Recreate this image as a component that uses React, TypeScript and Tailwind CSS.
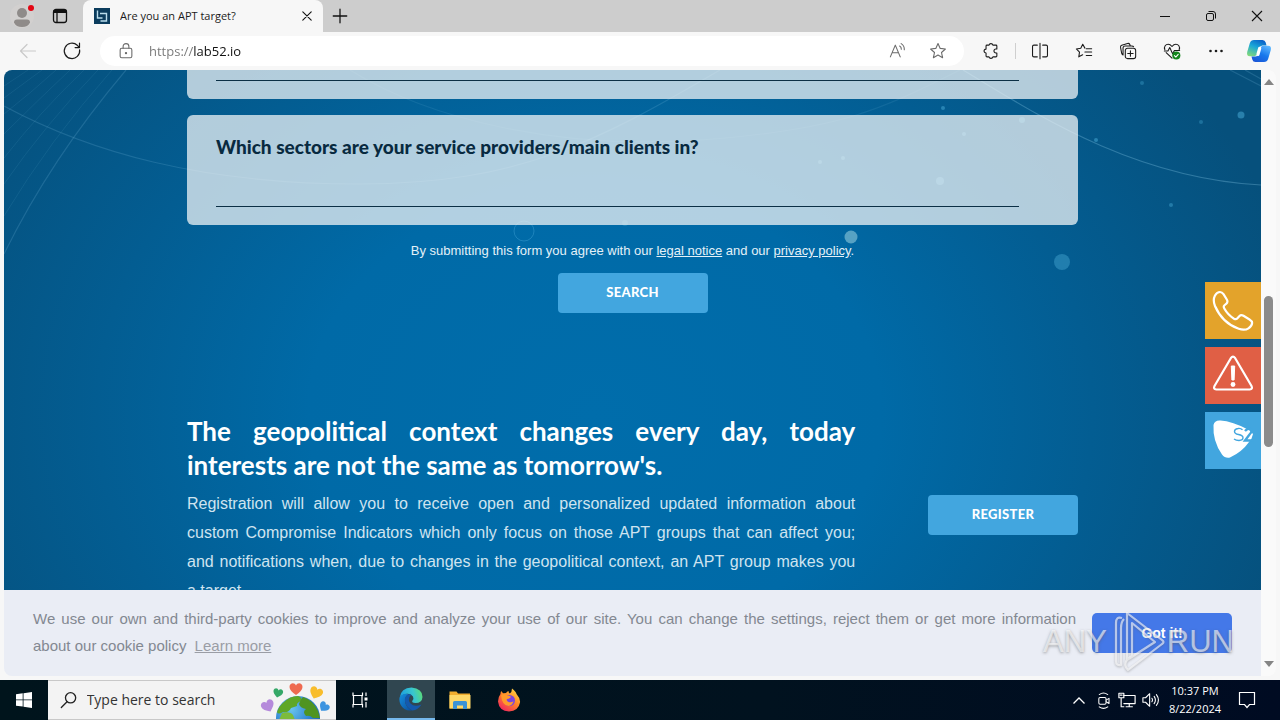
import type { ReactNode } from "react";

const UI = "font-['Open_Sans','Noto_Sans',sans-serif]";
const GEO = "font-['Lato','Open_Sans',sans-serif]";

function IconButton({ label, className, children }: { label: string; className: string; children: ReactNode }) {
  return (
    <button type="button" aria-label={label} className={`flex shrink-0 items-center justify-center ${className}`}>
      {children}
    </button>
  );
}

function Line({ size = 20, w = 1.2, children }: { size?: number; w?: number; children: ReactNode }) {
  return (
    <svg width={size} height={size} viewBox="0 0 20 20" fill="none" stroke="currentColor" strokeWidth={w} strokeLinecap="round" strokeLinejoin="round" aria-hidden="true">
      {children}
    </svg>
  );
}

const STAR = "M10 2.6l2.2 4.8 5.2.6-3.9 3.5 1.1 5.2-4.6-2.6-4.6 2.6 1.1-5.2L2.6 8l5.2-.6z";

function TabBar() {
  return (
    <header className="flex h-8 shrink-0 items-stretch bg-[#cdcdcd] text-[#111]">
      <IconButton label="Profile" className="w-11">
        <svg width="28" height="28" viewBox="0 0 28 28" aria-hidden="true">
          <circle cx="14" cy="14" r="12" fill="#d2d0cf" />
          <circle cx="14" cy="11" r="5" fill="#8f8b89" />
          <path d="M6 20.500q0-3 3-3h10q3 0 3 3-2 4.500-8 4.500t-8-4.500z" fill="#8f8b89" />
          <circle cx="23" cy="6" r="3" fill="#e30613" />
        </svg>
      </IconButton>
      <IconButton label="Tab actions" className="w-8">
        <svg width="16" height="16" viewBox="0 0 16 16" fill="none" stroke="#111" strokeWidth="1.300" aria-hidden="true">
          <rect x="1.500" y="1.500" width="13" height="13" rx="2.500" />
          <path d="M1.500 3.500h13" strokeWidth="3" />
          <path d="M5 4v10.500" />
        </svg>
      </IconButton>
      <div className="ml-[7px] flex w-60 items-center rounded-t-lg bg-[#f7f7f7] pr-2 pl-[11px]">
        <svg width="16" height="16" viewBox="0 0 16 16" className="shrink-0" aria-hidden="true">
          <rect width="16" height="16" fill="#0b3c5d" />
          <path d="M3.500 2.500v7.500h5M6 5.500h6.500v7.500h-6" fill="none" stroke="#b9dcec" strokeWidth="1.400" />
        </svg>
        <span className={`ml-[10px] grow truncate text-[11px] leading-4 text-[#1b1b1b] ${UI}`}>Are you an APT target?</span>
        <IconButton label="Close tab" className="size-4">
          <Line size={14} w={1.6}><path d="M4 4l12 12M16 4L4 16" /></Line>
        </IconButton>
      </div>
      <IconButton label="New tab" className="w-[34px]">
        <Line size={18} w={1.4}><path d="M10 2.500v15M2.500 10h15" /></Line>
      </IconButton>
      <div className="ml-auto flex">
        <IconButton label="Minimize" className="w-[46px]">
          <svg width="12" height="12" aria-hidden="true"><path d="M1 6.500h10" stroke="#111" /></svg>
        </IconButton>
        <IconButton label="Restore" className="w-[46px]">
          <svg width="12" height="12" fill="none" stroke="#111" aria-hidden="true">
            <rect x="1.500" y="3.500" width="7" height="7" rx="1.500" />
            <path d="M3.500 1.500h4.500q2.500 0 2.500 2.500v4.500" />
          </svg>
        </IconButton>
        <IconButton label="Close" className="w-[46px]">
          <svg width="12" height="12" stroke="#111" strokeWidth="1.100" aria-hidden="true"><path d="M1 1l10 10M11 1L1 11" /></svg>
        </IconButton>
      </div>
    </header>
  );
}

function Toolbar() {
  return (
    <nav className="flex h-[38px] shrink-0 items-center bg-[#f7f7f7] pl-[6px] text-[#1b1b1b]">
      <IconButton label="Back" className="h-8 w-11 text-[#c9c9c9]">
        <Line><path d="M17.500 10h-15M9 3.500L2.500 10 9 16.500" /></Line>
      </IconButton>
      <IconButton label="Refresh" className="h-8 w-11">
        <Line><path d="M17.600 8.800A7.700 7.700 0 1 1 15.300 4.300L17.400 6.500M17.500 2.200v4.400h-4.400" /></Line>
      </IconButton>
      <div className="ml-[6px] flex h-[30px] grow items-center rounded-full bg-white pl-[17px] text-[#6b6b6b]">
        <Line size={18}>
          <rect x="3.500" y="7" width="13" height="10.500" rx="1.800" />
          <path d="M6.800 7V5a3.200 3.200 0 0 1 6.400 0v2" />
          <circle cx="10" cy="12.300" r=".7" fill="currentColor" />
        </Line>
        <input
          aria-label="Address"
          defaultValue="https://lab52.io"
          className={`ml-[14px] min-w-0 grow bg-[linear-gradient(90deg,#767676_45px,#111_45px)] bg-clip-text text-[13px] leading-5 text-transparent outline-none ${UI}`}
        />
        <IconButton label="Read aloud" className="h-8 w-10">
          <Line size={18}><path d="M1.500 16.500L7 3.500l5.500 13M3.400 12h7.200M11.800 4.500q2 1.200 1.900 3.500M13.500 1.800q3.700 2.200 3.500 6.700" /></Line>
        </IconButton>
        <IconButton label="Add to favorites" className="mr-[6px] h-8 w-10">
          <Line size={20} w={1.1}><path d={STAR} /></Line>
        </IconButton>
      </div>
      <IconButton label="Extensions" className="ml-[5px] h-8 w-11">
        <Line size={18}>
          <path d="M5.500 3.500h2.300a2.200 2.200 0 0 1 4.300 0h3.400a1 1 0 0 1 1 1v3.300h-1a2.200 2.200 0 0 0 0 4.400h1v3.300a1 1 0 0 1-1 1h-3.400a2.200 2.200 0 0 1-4.300 0H5.500a1 1 0 0 1-1-1v-3.200a2.200 2.200 0 0 1 0-4.400V4.500a1 1 0 0 1 1-1z" />
        </Line>
      </IconButton>
      <span className="mr-[2px] ml-[2px] h-4 w-px bg-[#cfcfcf]" />
      <IconButton label="Split screen" className="h-8 w-11">
        <Line size={18}><path d="M10 1.500v17M7 3.500H3.200a1.500 1.500 0 0 0-1.500 1.500v10a1.500 1.500 0 0 0 1.500 1.500H7M13 3.500h3.800a1.500 1.500 0 0 1 1.500 1.500v10a1.500 1.500 0 0 1-1.500 1.500H13" /></Line>
      </IconButton>
      <IconButton label="Favorites" className="h-8 w-11">
        <Line size={18}><path d="M11 6.800L8.600 2.500 6.400 7 1.500 7.700 5 11.300 4.200 16.500 8.500 14.200M12.500 7.500h6M11 11.200h7.500M12.500 15h6" /></Line>
      </IconButton>
      <IconButton label="Collections" className="h-8 w-11">
        <Line size={18}>
          <rect x="7" y="7" width="11.500" height="11.500" rx="2.500" />
          <path d="M12.700 9.800v6M9.700 12.800h6M4.500 14.500Q3.400 14 3 12.500L1.700 6q-.3-1.800 1.300-2.400l6.500-2q1.800-.4 2.500 1.200l.5 1.400M4.500 14.500V6.700q0-2.200 2.300-2.200h7.500q1.500 0 1.900.8" />
        </Line>
      </IconButton>
      <IconButton label="Browser essentials" className="h-8 w-11">
        <Line size={18}>
          <path d="M2 8.500C.8 5 3 2.500 5.700 2.500 8 2.500 9.200 4 10 5c.8-1 2-2.500 4.300-2.500C17 2.500 19.200 5 18 8.500M3.500 11.800L10 18M1.500 10h4l2-3.800 3.200 7 2-3.700h5.800" />
          <circle cx="14.800" cy="15" r="4.500" fill="#13851b" stroke="none" />
          <path d="M12.700 15.200l1.500 1.500 2.700-3" stroke="#fff" />
        </Line>
      </IconButton>
      <IconButton label="Settings and more" className="h-8 w-11">
        <svg width="16" height="4" fill="#1b1b1b" aria-hidden="true"><circle cx="2.500" cy="2" r="1.300" /><circle cx="8" cy="2" r="1.300" /><circle cx="13.500" cy="2" r="1.300" /></svg>
      </IconButton>
      <IconButton label="Copilot" className="h-8 w-[42px]">
        <svg width="26" height="24" viewBox="0 0 26 24" aria-hidden="true">
          <defs>
            <linearGradient id="cpA" x1="0.700" y1="0" x2="0.200" y2="1"><stop offset="0" stopColor="#0a62c9" /><stop offset=".45" stopColor="#1aa7d8" /><stop offset="1" stopColor="#7fd87c" /></linearGradient>
            <linearGradient id="cpB" x1="0.800" y1="0" x2="0.200" y2="1"><stop offset="0" stopColor="#5cb6ff" /><stop offset=".5" stopColor="#1778ec" /><stop offset="1" stopColor="#1a55d6" /></linearGradient>
          </defs>
          <path d="M8 1h8.500q2.500 0 3.200 2.500l.8 3h-4q-2.500 0-3.300 2.800l-1.400 5q-.8 2.900-3.300 2.900H4Q.3 17.200 1.200 13L3.800 4.300Q4.900 1 8 1z" fill="url(#cpA)" />
          <path d="M18 23H9.500Q7 23 6.300 20.500l-.8-3h4q2.500 0 3.300-2.800l1.400-5q.8-2.900 3.300-2.900H22q3.700 0 2.800 4.200l-2.600 8.700Q21.100 23 18 23z" fill="url(#cpB)" />
          <path d="M13.700 9.300l-1.700 6" stroke="#fff" strokeWidth="3.200" strokeLinecap="round" />
        </svg>
      </IconButton>
    </nav>
  );
}

function Backdrop() {
  return (
    <svg className="absolute top-0 left-0" width="1257" height="520" viewBox="4 70 1257 520" fill="none" aria-hidden="true">
      <g stroke="#7fc0e0" strokeOpacity=".2" strokeWidth="1.200">
        <path d="M4 106C90 152 200 184 360 184S600 140 720 70" />
        <path d="M350 70C430 120 560 150 700 140S880 110 960 70" strokeOpacity=".12" />
        <path d="M963 70C1030 110 1130 178 1261 185" strokeOpacity=".35" />
        <path d="M1230 70L1261 86M1245 70l16 9" />
        <path d="M126 70Q50 160 4 254" />
      </g>
      <g stroke="#7fc0e0" strokeOpacity=".1">
        <path d="M112 70Q50 140 4 216M98 70Q45 125 4 184M84 70Q40 112 4 158M70 70Q38 100 4 134M56 70Q32 92 4 114M42 70L4 98M28 70L4 86" />
      </g>
      <circle cx="524" cy="231" r="10" stroke="#3a9bd0" strokeOpacity=".5" />
      <g fill="#3f9fcb" fillOpacity=".6">
        <circle cx="851" cy="237" r="6.500" fill="#5fa8c8" fillOpacity=".9" />
        <circle cx="1062" cy="262" r="8" fillOpacity=".5" />
        <circle cx="940" cy="181" r="4" />
        <circle cx="1241" cy="115" r="3.500" />
        <circle cx="1022" cy="120" r="3" />
        <circle cx="943" cy="108" r="2" />
        <circle cx="1096" cy="140" r="2" />
        <circle cx="1142" cy="83" r="2" fillOpacity=".4" />
        <circle cx="1201" cy="122" r="2" fillOpacity=".4" />
        <circle cx="1171" cy="205" r="2" fillOpacity=".5" />
        <circle cx="625" cy="223" r="3" fillOpacity=".4" />
        <circle cx="843" cy="158" r="2" />
        <circle cx="820" cy="162" r="2" />
        <circle cx="964" cy="134" r="2" />
      </g>
    </svg>
  );
}

function Question({ id, label, className = "" }: { id: string; label?: string; className?: string }) {
  return (
    <div className={`rounded-md bg-[#edf3f5]/75 pt-5 pr-[59px] pb-[18px] pl-[29px] ${className}`}>
      <label htmlFor={id} className={`block h-6 text-[19px] leading-6 font-black text-[#082a40] ${GEO}`}>{label}</label>
      <input id={id} className="block h-12 w-full border-b border-[#0b2f45] bg-transparent outline-none" />
    </div>
  );
}

function SideLinks() {
  return (
    <aside className="absolute top-[212px] right-0 flex flex-col gap-2">
      <a href="#contact" aria-label="Call us" className="flex h-[57px] w-14 items-center justify-center bg-[#e3a32b]">
        <svg width="42" height="42" viewBox="0 0 42 42" fill="none" stroke="#fff" strokeWidth="2.200" strokeLinejoin="round" aria-hidden="true">
          <path d="M3 5.500Q5 2 8 2q2 0 3.500 2.200l3.300 5.300q1.500 2.600-.6 4.300l-1.700 1.500q-1.400 1.200-.2 3.200 3.500 6.300 9.700 10.200 2 1.100 3.200-.2l2.300-2.500q1.600-1.600 4-.2l6 3.700q2.800 1.800 2.600 3.600-.3 3-3.600 5.200-3.800 2.500-9.800.5C16 35 7.500 26.500 3 16 .5 9.500 2 7.500 3 5.500z" />
        </svg>
      </a>
      <a href="#incident" aria-label="Report an incident" className="flex h-[57px] w-14 items-center justify-center bg-[#e05f45] pb-1">
        <svg width="42" height="40" viewBox="0 0 42 40" fill="none" stroke="#fff" strokeWidth="2.200" strokeLinejoin="round" aria-hidden="true">
          <path d="M18.800 4.200q2.200-3 4.400 0L39.500 32q1.500 3.300-1.800 3.500H4.300Q1 35.300 2.500 32z" />
          <path d="M19.300 12h3.400l-.6 14h-2.200z" fill="#fff" strokeWidth="1" />
          <circle cx="21" cy="30.500" r="2.400" fill="#fff" stroke="none" />
        </svg>
      </a>
      <a href="#s2" aria-label="S2 Grupo" className="flex h-[57px] w-14 items-center justify-center bg-[#42a6df] pb-1">
        <svg width="42" height="40" viewBox="0 0 42 40" aria-hidden="true">
          <path d="M1.500 6Q2.500 1 8.500 1.500 20 2 37 11l4 4q-1 5-4 8Q30 33 18 38.500q-5 1-8-3Q.5 22 1.500 6z" fill="#fff" />
          <path d="M30.500 10.800q-2-1.800-4.500-1.300-3.500.6-3.500 3 0 2.300 4 3 4.500.8 4.500 3.300 0 2.500-4 2.700-3 0-5-1.500" fill="none" stroke="#42a6df" strokeWidth="1.400" />
          <path d="M33 12q3-3.500 6-1.500 1.500 2-1.500 5L33 21.500H42" fill="none" stroke="#42a6df" strokeWidth="2.400" />
        </svg>
      </a>
    </aside>
  );
}

function Scrollbar() {
  return (
    <div className="flex w-[15px] shrink-0 flex-col items-center rounded-r-lg bg-[#fafafa] py-[9px]" aria-hidden="true">
      <svg width="10" height="6" fill="#858585"><path d="M5 0l5 6H0z" /></svg>
      <span className="mt-[211px] h-[151px] w-[9px] rounded-full bg-[#8b8b8b]" />
      <svg width="10" height="6" fill="#858585" className="mt-auto"><path d="M5 6L0 0h10z" /></svg>
    </div>
  );
}

function Page() {
  return (
    <div className="relative flex min-h-0 grow px-1 pb-1">
      <div className="relative flex min-w-0 grow flex-col overflow-hidden rounded-l-lg">
        <main className="relative min-h-0 grow overflow-hidden bg-[radial-gradient(ellipse_60%_115%_at_47%_66%,#006dab_0%,#006aa7_38%,#035d92_66%,#06507c_96%)]">
          <Backdrop />
          <div className="relative mx-auto w-full max-w-[891px]">
            <form>
              <Question id="q-own" className="-mt-[81px]" />
              <Question id="q-providers" className="mt-4" label="Which sectors are your service providers/main clients in?" />
              <p className="mt-4 text-center text-[13px] leading-5 text-[#e4f1f8]">
                By submitting this form you agree with our <a href="#legal" className="underline">legal notice</a> and our{" "}
                <a href="#privacy" className="underline">privacy policy</a>.
              </p>
              <button type="button" className={`mx-auto mt-3 block h-10 w-[150px] rounded-sm bg-[#42a6df] text-[13px] font-black tracking-wide text-white ${GEO}`}>
                SEARCH
              </button>
            </form>
            <section className="mt-[101px] flex items-start justify-between">
              <div className="w-3/4">
                <h2 className={`text-justify text-[26px] leading-[34px] font-bold text-white ${GEO}`}>
                  <span className="block [text-align-last:justify]">The geopolitical context changes every day, today</span>{" "}
                  <span className="block">interests are not the same as tomorrow's.</span>
                </h2>
                <p className="mt-[7px] text-base leading-[29px] text-[#cfe4f0]">
                  <span className="block [text-align-last:justify]">Registration will allow you to receive open and personalized updated information about</span>{" "}
                  <span className="block [text-align-last:justify]">custom Compromise Indicators which only focus on those APT groups that can affect you;</span>{" "}
                  <span className="block [text-align-last:justify]">and notifications when, due to changes in the geopolitical context, an APT group makes you</span>{" "}
                  <span className="block">a target.</span>
                </p>
              </div>
              <button type="button" className={`mt-[81px] h-10 w-[150px] rounded-sm bg-[#42a6df] text-[13px] font-black tracking-wide text-white ${GEO}`}>
                REGISTER
              </button>
            </section>
          </div>
          <SideLinks />
        </main>
        <div className="flex h-[86px] shrink-0 items-center gap-4 bg-[#eaedf5] px-[29px]">
          <p className="grow pb-[2px] text-[15px] leading-[27px] text-[#838891]">
            <span className="block [text-align-last:justify]">
              We use our own and third-party cookies to improve and analyze your use of our site. You can change the settings, reject them or get more information
            </span>{" "}
            <span className="block">
              about our cookie policy <a href="#cookies" className="ml-1 text-[#9a9da5] underline">Learn more</a>
            </span>
          </p>
          <button type="button" className="h-10 w-[140px] shrink-0 rounded-[5px] bg-[#4478e8] text-sm font-bold text-white">
            Got it!
          </button>
        </div>
      </div>
      <Scrollbar />
      <div className="pointer-events-none absolute right-[46px] bottom-[6px] flex items-center text-[31px] leading-[60px] text-white/60 [text-shadow:0_1px_3px_rgb(90_90_90/.55)]">
        <span>ANY</span>
        <svg width="60" height="64" viewBox="0 0 60 64" fill="none" stroke="#fff" strokeOpacity=".6" strokeWidth="2.200" strokeLinejoin="round" className="drop-shadow-[0_1px_1px_rgb(90_90_90/.6)]" aria-hidden="true">
          <path d="M15 8q-6-2-6 5v38q0 5 5 4V18q0-6 3-9" />
          <path d="M20 3v46l5-3V13l23 19-28 18q-4 5 1 10l34-26q3-2 0-4z" />
        </svg>
        <span>RUN</span>
      </div>
    </div>
  );
}

function Heart({ x, y, r, color }: { x: number; y: number; r: number; color: string }) {
  return (
    <path
      transform={`translate(${x} ${y}) rotate(${r})`}
      d="M0 6C-4 3-6.500 1-6.500-2-6.500-6-1.500-7 0-3.500 1.500-7 6.500-6 6.500-2 6.500 1 4 3 0 6z"
      fill={color}
    />
  );
}

function Taskbar() {
  return (
    <footer className={`flex h-10 shrink-0 items-stretch bg-[linear-gradient(90deg,#00141c,#01121f_60%,#000b22)] text-white ${UI}`}>
      <IconButton label="Start" className="w-12">
        <svg width="16" height="16" viewBox="0 0 16 16" fill="#fff" aria-hidden="true"><path d="M0 2.300L6.700 1.300v6.200H0zM7.500 1.200L16 0v7.500H7.500zM0 8.300h6.700v6.300L0 13.700zM7.500 8.300H16V16l-8.500-1.200z" /></svg>
      </IconButton>
      <div className="flex w-72 items-center border-y border-[#c8c8c8] bg-[#f3f3f3] pl-3 text-[#222]">
        <Line size={18} w={1.5}><circle cx="12" cy="7.500" r="5.800" /><path d="M8 12L1.500 18.500" /></Line>
        <input aria-label="Search" placeholder="Type here to search" className="ml-[9px] min-w-0 grow bg-transparent text-[14px] leading-5 outline-none placeholder:text-[#333]" />
        <svg width="76" height="38" viewBox="260 681 76 38" className="shrink-0" aria-hidden="true">
          <defs>
            <radialGradient id="sea" cx=".35" cy=".3" r=".8"><stop offset="0" stopColor="#69c4ee" /><stop offset=".6" stopColor="#2b7fd0" /><stop offset="1" stopColor="#1d5ea8" /></radialGradient>
          </defs>
          <circle cx="298" cy="718" r="22" fill="url(#sea)" />
          <path d="M284 702q6-6 14-6 5 2 3 5-5 2-4 5l-6 2q-2 5-8 4-5 3-6 0 2-6 7-10z" fill="#5fa726" />
          <path d="M303 697q10 3 15 14l2 7h-7q-3-3-7-2-4-4 0-7-6-1-7-5 1-4 4-7z" fill="#4f9420" />
          <path d="M282 713q8-2 11 2l2 5h-16z" fill="#7dbb3b" />
          <Heart x={268} y={706} r={-25} color="#b58adb" />
          <g transform="translate(278 693) scale(.75) rotate(12)"><Heart x={0} y={0} r={0} color="#35a867" /></g>
          <Heart x={296} y={689} r={0} color="#ef6a50" />
          <Heart x={316} y={693} r={22} color="#f8bd2c" />
          <g transform="translate(324 707) scale(.8)"><Heart x={0} y={0} r={38} color="#3d94e0" /></g>
        </svg>
      </div>
      <IconButton label="Task view" className="w-12">
        <svg width="18" height="18" viewBox="0 0 18 18" fill="none" stroke="#fff" strokeWidth="1.200" aria-hidden="true">
          <path d="M2 1.500v3h9.500v-3M2 16.500v-3h9.500v3M2.500 4.500v9M11 4.500v9M15 1.500v3.500M15 11v5.500" />
          <path d="M13.500 8h3" strokeWidth="3" />
        </svg>
      </IconButton>
      <IconButton label="Microsoft Edge" className="ml-[3px] w-12 border-b-2 border-[#76b9ed] bg-[#304650]">
        <svg width="24" height="24" viewBox="0 0 24 24" aria-hidden="true">
          <defs>
            <linearGradient id="eg1" x1="0" y1=".5" x2="1" y2=".3"><stop offset="0" stopColor="#1b9de0" /><stop offset=".6" stopColor="#38c6cf" /><stop offset="1" stopColor="#5cdc74" /></linearGradient>
            <linearGradient id="eg2" x1="0" y1="0" x2="1" y2="1"><stop offset="0" stopColor="#1590df" /><stop offset="1" stopColor="#0b4c9c" /></linearGradient>
          </defs>
          <path d="M.5 11Q2 .5 12.500.5 23.500 1.500 23.500 10q-.5 6-7 6-4.500-.3-3-2.500 1.500-1.800.5-4-2-3.200-6-2.800-5 .5-7.500 4.300z" fill="url(#eg1)" />
          <path d="M.5 11Q4 5.500 9.500 7.200q-3.500 2-3.500 6.300Q6.500 21 13.500 23.400 5 24.500 1.500 17.500 0 14 .5 11z" fill="url(#eg2)" />
          <path d="M9.500 7.200Q5 9.500 6 14.500q1.500 6.500 7.500 9 5.500-.5 9-6-7 3-11-1-3-3.500-.5-7.500 1-1 2-.5-1.500-1.500-3.500-1.300z" fill="#1459ad" />
        </svg>
      </IconButton>
      <IconButton label="File Explorer" className="w-[50px]">
        <svg width="22" height="20" viewBox="0 0 22 20" aria-hidden="true">
          <path d="M.5 1.500h7l1.500 2H21v15H.5z" fill="#f2ad2e" />
          <path d="M.5 5h21v13.500H.5z" fill="#ffd868" />
          <path d="M4 19v-6.500q0-1.500 1.500-1.500h11q1.500 0 1.500 1.500V19h-4v-3.500H8V19z" fill="#3b93d6" />
        </svg>
      </IconButton>
      <IconButton label="Firefox" className="w-12">
        <svg width="24" height="24" viewBox="0 0 24 24" aria-hidden="true">
          <defs><linearGradient id="ff" x1=".9" y1="0" x2=".2" y2="1"><stop offset="0" stopColor="#ffe14a" /><stop offset=".45" stopColor="#ff8a27" /><stop offset="1" stopColor="#f0215f" /></linearGradient></defs>
          <path d="M15 .5q4 3 4.500 5.500 4 4.500 3.500 8.500-1.500 8.500-11 9Q2 23 1 13.500 1 9 3.500 6q0-2 .8-3 .7 1.500 2 2.200L9 5q1-1.500 2.500-2 0 1.500 1.300 2.500Q15 4 15 .5z" fill="url(#ff)" />
          <circle cx="12.500" cy="12.500" r="5.500" fill="#7a45e0" />
          <path d="M4 7q4-2 6.500.5 2.500.3 3.500 1.500-2 2-4 2-1 2 1.500 3 3 .8 5-.8-1 4-5 4.800Q5 17.500 4 7z" fill="#ff9a2a" />
        </svg>
      </IconButton>
      <div className="ml-auto flex items-center">
        <IconButton label="Show hidden icons" className="h-10 w-6"><svg width="12" height="7" fill="none" stroke="#fff" strokeWidth="1.300" aria-hidden="true"><path d="M.5 6.500L6 1l5.500 5.500" /></svg></IconButton>
        <IconButton label="Camera" className="h-10 w-6">
          <Line size={17}><rect x="4.500" y="6.500" width="8.500" height="8" rx="1.500" /><path d="M13 9.500l3.500-2v6l-3.500-2M5 3q5-3.500 10 0M5 17.500q5 3.500 10 0" /></Line>
        </IconButton>
        <IconButton label="Network" className="h-10 w-6">
          <Line size={18} w={1.3}><path d="M6 5h13v9H6.500M12.500 14v3.500M9 17.500h7M3.500 8v9.500h3M1 2.500h5.500v5H1zM2.500 4.500h2" /></Line>
        </IconButton>
        <IconButton label="Volume" className="h-10 w-6">
          <Line size={18}><path d="M1 7.500h3L8.500 3v14L4 12.500H1zM11 8q1.300 2 0 4M13.500 6q2.800 4 0 8M16 4q4.500 6 0 12" /></Line>
        </IconButton>
        <div className="ml-1 w-14 text-center text-[11px] leading-[18px]">
          <p className="whitespace-nowrap">10:37 PM</p>
          <p className="whitespace-nowrap">8/22/2024</p>
        </div>
        <IconButton label="Notifications" className="mr-[9px] h-10 w-12">
          <svg width="18" height="18" viewBox="0 0 18 18" fill="none" stroke="#fff" strokeWidth="1.200" aria-hidden="true"><path d="M1.500 1.500h15v12h-5L9 16.500l-2.500-3h-5z" /></svg>
        </IconButton>
      </div>
    </footer>
  );
}

export default function App() {
  return (
    <div className="flex h-screen flex-col overflow-hidden bg-[#f7f7f7] font-['Liberation_Sans',Arial,sans-serif]">
      <TabBar />
      <Toolbar />
      <Page />
      <Taskbar />
    </div>
  );
}
